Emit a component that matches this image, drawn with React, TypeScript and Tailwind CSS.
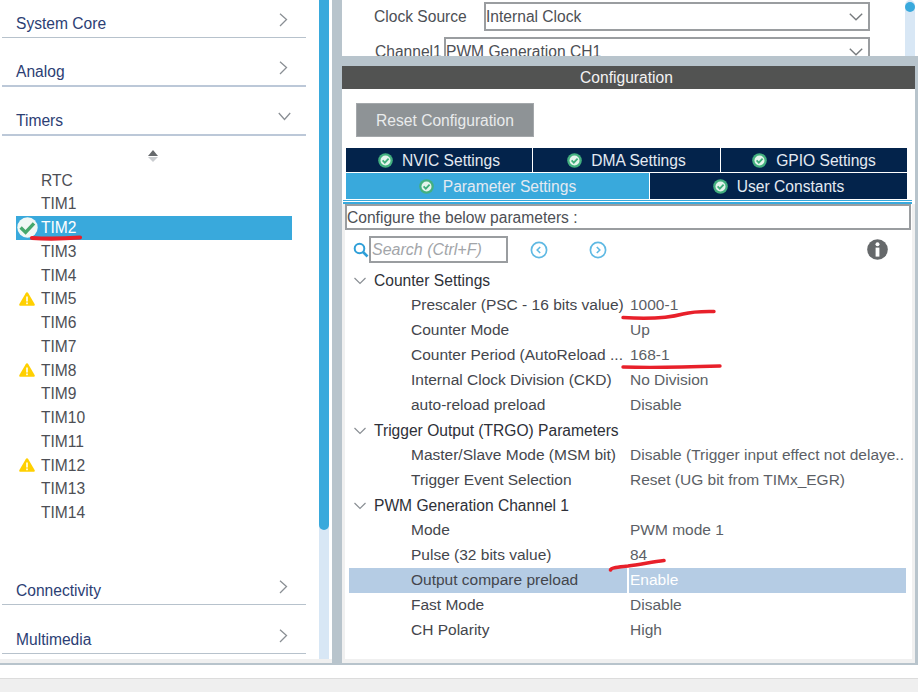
import React from "react";

const font = { fontFamily: '"Liberation Sans", Arial, sans-serif' };

function Chevron({ dir }: { dir: "right" | "down" }) {
  return dir === "right" ? (
    <svg width="9" height="14" viewBox="0 0 9 14" fill="none" stroke="#8a8f94" strokeWidth="1.3">
      <path d="M1 0.8 L7.5 6.5 L1 13" />
    </svg>
  ) : (
    <svg width="13" height="9" viewBox="0 0 13 9" fill="none" stroke="#8a8f94" strokeWidth="1.3">
      <path d="M0.8 1 L6.5 7.5 L12.2 1" />
    </svg>
  );
}

function SmallChevron() {
  return (
    <svg width="12" height="8" viewBox="0 0 12 8" fill="none" stroke="#8a8f94" strokeWidth="1.2">
      <path d="M0.5 1 L6 6.5 L11.5 1" />
    </svg>
  );
}

function Warn() {
  return (
    <svg width="16" height="14" viewBox="0 0 16 14">
      <path d="M8 0.3 C8.6 0.3 9 0.7 9.3 1.2 L15.6 12 C16.1 13 15.6 13.8 14.6 13.8 L1.4 13.8 C0.4 13.8 -0.1 13 0.4 12 L6.7 1.2 C7 0.7 7.4 0.3 8 0.3Z" fill="#ffd000" />
      <rect x="7.2" y="4.5" width="1.6" height="5" fill="#fff" />
      <rect x="7.2" y="10.5" width="1.6" height="1.7" fill="#fff" />
    </svg>
  );
}

function TabCheck() {
  return (
    <svg width="15" height="15" viewBox="0 0 15 15">
      <circle cx="7.5" cy="7.5" r="7.3" fill="#43b07f" />
      <circle cx="7.5" cy="7.5" r="5" fill="#e4f4ec" />
      <path d="M4.6 7.4 L6.8 9.6 L10.6 5.6" fill="none" stroke="#3fae7a" strokeWidth="1.8" />
    </svg>
  );
}

function BigCheck() {
  return (
    <svg width="21" height="21" viewBox="0 0 21 21">
      <circle cx="10.5" cy="10.5" r="10.2" fill="#f1f8f4" />
      <path d="M3.6 10.6 L8.6 15.4 L17 6.4" fill="none" stroke="#46a86c" strokeWidth="3.4" />
    </svg>
  );
}

function Section({ name, open, thick, className = "" }: { name: string; open?: boolean; thick?: boolean; className?: string }) {
  return (
    <div className={`relative shrink-0 h-[49px] ml-[2px] w-[304px] flex items-end ${thick ? "border-b-2 border-[#bcc8d8]" : "border-b border-[#b7c2cc]"} ${className}`}>
      <span className="pl-[14px] pb-[4px] text-[15.6px] leading-[18px] text-[#2c3e74]">{name}</span>
      <span className={open ? "absolute right-[15px] bottom-[13px] flex" : "absolute right-[18px] bottom-[10px] flex"}>
        <Chevron dir={open ? "down" : "right"} />
      </span>
    </div>
  );
}

const timers: { n: string; warn?: boolean; sel?: boolean }[] = [
  { n: "RTC" },
  { n: "TIM1" },
  { n: "TIM2", sel: true },
  { n: "TIM3" },
  { n: "TIM4" },
  { n: "TIM5", warn: true },
  { n: "TIM6" },
  { n: "TIM7" },
  { n: "TIM8", warn: true },
  { n: "TIM9" },
  { n: "TIM10" },
  { n: "TIM11" },
  { n: "TIM12", warn: true },
  { n: "TIM13" },
  { n: "TIM14" },
];

function TimerRow({ n, warn, sel }: { n: string; warn?: boolean; sel?: boolean }) {
  return (
    <div className={`relative h-[23.76px] ml-[16px] w-[276px] flex items-center pl-[25px] text-[15.6px] ${sel ? "bg-[#39a9dc] text-white" : "text-[#4d4f55]"}`}>
      {warn && (
        <span className="absolute left-[3px] top-[5px] flex">
          <Warn />
        </span>
      )}
      {sel && (
        <span className="absolute left-[1px] top-[1px] flex">
          <BigCheck />
        </span>
      )}
      {n}
    </div>
  );
}

function Left() {
  return (
    <div className="relative w-[332px] flex flex-col bg-white">
      <div className="h-[659px] flex overflow-hidden">
        <div className="w-[319px] shrink-0 flex flex-col">
          <Section name="System Core" className="-mt-[11px]" />
          <Section name="Analog" thick />
          <Section name="Timers" open thick />
          <div className="h-[16px] mt-[14px] ml-[148px] flex flex-col items-start gap-[1px]">
            <span className="w-0 h-0 border-x-[5px] border-x-transparent border-b-[6px] border-b-[#66696c]" />
            <span className="w-0 h-0 border-x-[5px] border-x-transparent border-t-[5px] border-t-[#c9cccf]" />
          </div>
          <div className="mt-[2.4px]">
            {timers.map((t) => (
              <TimerRow key={t.n} {...t} />
            ))}
          </div>
          <div className="h-[31.2px] shrink-0" />
          <Section name="Connectivity" />
          <Section name="Multimedia" />
        </div>
        <div className="w-[10px] shrink-0 bg-[#d8e7f5]">
          <div className="h-[530px] bg-[#39a9dc] rounded-b-[5px]" />
        </div>
      </div>
      <div className="h-[4px] bg-[#f0f0f0]" />
      {/* red pen stroke under TIM2 */}
      <svg className="absolute left-[28px] top-[233px]" width="58" height="10" viewBox="0 0 58 10" fill="none">
        <path d="M4 5 C20 6 38 5.5 52 4.5" stroke="#e8202a" strokeWidth="4.2" strokeLinecap="round" />
      </svg>
    </div>
  );
}

function SelectChevron() {
  return (
    <svg width="14" height="8" viewBox="0 0 14 8" fill="none" stroke="#777b7e" strokeWidth="1.4">
      <path d="M0.8 0.8 L7 6.8 L13.2 0.8" />
    </svg>
  );
}

function Select({ text }: { text: string }) {
  return (
    <div className="flex-1 h-[29px] border-2 border-[#9a9da0] flex items-center justify-between pr-[5px] text-[15.6px] leading-none text-[#4d4f55]">
      <span className="whitespace-nowrap">{text}</span>
      <SelectChevron />
    </div>
  );
}

function Tab({ label, active, className }: { label: string; active?: boolean; className: string }) {
  return (
    <div className={`flex items-center justify-center gap-[9px] pt-[1px] text-[15.6px] text-[#e3eaf2] ${active ? "bg-[#39a9dc]" : "bg-[#03234b]"} ${className}`}>
      <TabCheck />
      <span>{label}</span>
    </div>
  );
}

function Head({ label }: { label: string }) {
  return (
    <div className="h-[25px] flex items-center pl-[12px] text-[15.6px] text-[#2e3038]">
      <span className="w-[20px] flex">
        <SmallChevron />
      </span>
      <span>{label}</span>
    </div>
  );
}

function Param({ label, value, hi }: { label: string; value: string; hi?: boolean }) {
  return (
    <div className={`h-[25px] w-[557px] ml-[7px] flex items-center text-[15.5px] ${hi ? "bg-[#b5cce4]" : ""}`}>
      <span className="w-[278px] pl-[62px] pb-[1px] whitespace-nowrap text-[#44464c] shrink-0">{label}</span>
      <span className={`pl-[1px] pb-[1px] whitespace-nowrap h-full flex items-center ${hi ? "border-l-2 border-white text-white" : "border-l-2 border-transparent text-[#5c5f66]"}`}>{value}</span>
    </div>
  );
}

function Right() {
  return (
    <div className="flex-1 flex flex-col min-w-0">
      {/* top strip */}
      <div className="h-[56px] flex bg-white overflow-hidden">
        <div className="w-[563px] pl-[32px] pr-[35px] pt-[2px]">
          <div className="flex items-center h-[29px] text-[15.6px]">
            <span className="w-[110px] text-[#4d4f55]">Clock Source</span>
            <Select text="Internal Clock" />
          </div>
          <div className="flex items-center h-[29px] mt-[6px] text-[15.6px]">
            <span className="w-[70px] pl-[1px] text-[#4d4f55] whitespace-nowrap">Channel1</span>
            <Select text="PWM Generation CH1" />
          </div>
        </div>
        <div className="w-[10px] bg-[#d8e7f5] rounded-t-[5px]">
          <div className="h-[10px] w-[10px] rounded-full bg-[#39a9dc] mt-[2px]" />
        </div>
      </div>
      <div className="h-[10px] bg-[#b8c4cc]" />
      {/* config panel */}
      <div className="relative flex-1 flex flex-col bg-white w-[576px] border-r-[3px] border-[#b8c4cc]">
        <div className="h-[23px] bg-[#525352] pr-[4px] text-[#f2f2f2] text-[15.6px] flex items-center justify-center">Configuration</div>
        <div className="h-[59px] flex items-end px-[14px] pb-[11px]">
          <div className="w-[178px] h-[34px] pt-[1px] bg-[#8e9396] border border-[#a4a8ab] text-[#e9ebec] text-[15.6px] flex items-center justify-center">Reset Configuration</div>
        </div>
        <div className="ml-[4px] w-[561px] flex flex-col">
          <div className="flex h-[24px] gap-[1px]">
            <Tab label="NVIC Settings" className="w-[186px]" />
            <Tab label="DMA Settings" className="w-[187px]" />
            <Tab label="GPIO Settings" className="flex-1" />
          </div>
          <div className="flex h-[26px] gap-[1px] mt-[1px]">
            <Tab label="Parameter Settings" active className="w-[303px]" />
            <Tab label="User Constants" className="flex-1" />
          </div>
        </div>
        <div className="ml-[1px] w-[569px] h-[4px] mt-[1px] border-t border-b-2 border-[#39a9dc] bg-white" />
        <div className="ml-[3px] w-[566px] h-[26px] pt-[1px] border-2 border-[#9a9da0] text-[15.6px] text-[#4d4f55] flex items-center">Configure the below parameters :</div>
        <div className="h-[27px] mt-[6px] flex items-center pl-[11px]">
          <svg width="16" height="16" viewBox="0 0 16 16" fill="none" stroke="#2f9fd8" strokeWidth="2">
            <circle cx="6.5" cy="6.5" r="4.8" />
            <path d="M10 10 L14.5 14.5" strokeWidth="2.6" />
          </svg>
          <div className="w-[139px] h-[27px] border-2 border-[#9a9da0] flex items-center pl-[1px] italic text-[16px] text-[#a2a5a9] whitespace-nowrap">Search (Ctrl+F)</div>
          <svg className="ml-[22px]" width="18" height="18" viewBox="0 0 18 18" fill="none" stroke="#5fb9e3">
            <circle cx="9" cy="9" r="7.6" strokeWidth="1.7" />
            <path d="M10.2 6 L7.2 9 L10.2 12" strokeWidth="1.6" />
          </svg>
          <svg className="ml-[41px]" width="18" height="18" viewBox="0 0 18 18" fill="none" stroke="#5fb9e3">
            <circle cx="9" cy="9" r="7.6" strokeWidth="1.7" />
            <path d="M7.8 6 L10.8 9 L7.8 12" strokeWidth="1.6" />
          </svg>
          <svg className="ml-[260px]" width="21" height="21" viewBox="0 0 21 21">
            <circle cx="10.5" cy="10.5" r="10.3" fill="#66696b" />
            <circle cx="10.5" cy="5.2" r="2" fill="#fff" />
            <rect x="8.6" y="8.6" width="3.8" height="9" fill="#fff" />
          </svg>
        </div>
        <div className="mt-[5px]">
          <Head label="Counter Settings" />
          <Param label="Prescaler (PSC - 16 bits value)" value="1000-1" />
          <Param label="Counter Mode" value="Up" />
          <Param label="Counter Period (AutoReload ..." value="168-1" />
          <Param label="Internal Clock Division (CKD)" value="No Division" />
          <Param label="auto-reload preload" value="Disable" />
          <Head label="Trigger Output (TRGO) Parameters" />
          <Param label="Master/Slave Mode (MSM bit)" value="Disable (Trigger input effect not delaye.." />
          <Param label="Trigger Event Selection" value="Reset (UG bit from TIMx_EGR)" />
          <Head label="PWM Generation Channel 1" />
          <Param label="Mode" value="PWM mode 1" />
          <Param label="Pulse (32 bits value)" value="84" />
          <Param label="Output compare preload" value="Enable" hi />
          <Param label="Fast Mode" value="Disable" />
          <Param label="CH Polarity" value="High" />
        </div>
        <div className="mt-auto h-[4px] bg-[#f0f0f0]" />
        {/* faint inner edges of the panel */}
        <div className="absolute left-0 top-[138px] bottom-0 w-[3px] bg-[#f0f0f0]" />
        <div className="absolute right-0 top-[138px] bottom-0 w-[3px] bg-[#f0f0f0]" />
      </div>
    </div>
  );
}

export default function App() {
  return (
    <div style={font} className="relative w-[918px] h-[692px] overflow-hidden bg-white flex flex-col">
      <div className="h-[665px] flex border-b-2 border-[#b8c4cc]">
        <Left />
        <div className="w-[10px] bg-[#b8c4cc]" />
        <div className="flex-1 flex min-w-0">
          <Right />
        </div>
      </div>
      <div className="h-[13px]" />
      <div className="flex-1 bg-[#efefef] border-t border-[#dcdcdc]" />
      {/* red pen marks over the parameter table */}
      <svg className="absolute left-0 top-0 pointer-events-none" width="918" height="692" viewBox="0 0 918 692" fill="none" stroke="#e8202a" strokeLinecap="round">
        <path d="M623 317.5 C645 319 668 318 683 314 C695 311 705 311.5 714 311.5" strokeWidth="3.4" />
        <path d="M623 367 C655 368 690 367 720 366" strokeWidth="3.4" />
        <path d="M610.5 570 C611 568 618 567 628 566 C640 564.5 652 562 664 560.5" strokeWidth="3.6" />
      </svg>
    </div>
  );
}
